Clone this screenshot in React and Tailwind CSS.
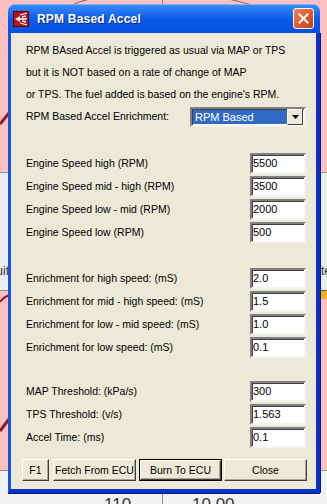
import React from 'react'

const engineRows = [
  ['Engine Speed high (RPM)', '5500'],
  ['Engine Speed mid - high (RPM)', '3500'],
  ['Engine Speed low - mid (RPM)', '2000'],
  ['Engine Speed low (RPM)', '500'],
]

const enrichRows = [
  ['Enrichment for high speed: (mS)', '2.0'],
  ['Enrichment for mid - high speed: (mS)', '1.5'],
  ['Enrichment for low - mid speed: (mS)', '1.0'],
  ['Enrichment for low speed: (mS)', '0.1'],
]

const thresholdRows = [
  ['MAP Threshold: (kPa/s)', '300'],
  ['TPS Threshold: (v/s)', '1.563'],
  ['Accel Time: (ms)', '0.1'],
]

function Field({ label, value }) {
  return (
    <div className="flex items-center justify-between h-[21px]">
      <span className="whitespace-nowrap">{label}</span>
      <div className="w-[56px] h-[21px] bg-white border-2 border-t-[#808080] border-l-[#808080] border-b-[#f4f3ee] border-r-[#f4f3ee] shadow-[inset_1px_1px_0_#404040] pl-[1px] leading-[17px] text-[11px]">
        {value}
      </div>
    </div>
  )
}

function Section({ rows, className }) {
  return (
    <div className={`flex flex-col gap-[2px] pl-[15px] pr-[10px] ${className}`}>
      {rows.map(([l, v]) => <Field key={l} label={l} value={v} />)}
    </div>
  )
}

function Btn({ children, w, def }) {
  return (
    <div className={`${w} h-[22px] ${def ? 'border border-black' : ''}`}>
      <div className="w-full h-full bg-[#ece9d8] border border-t-white border-l-white border-b-[#404040] border-r-[#404040] shadow-[inset_-1px_-1px_0_#aca899] flex items-center justify-center text-[10.5px] leading-none whitespace-nowrap">
        {children}
      </div>
    </div>
  )
}

function AppIcon() {
  return (
    <svg width="16" height="16" viewBox="0 0 16 16">
      <rect x="0.5" y="0.5" width="15" height="15" fill="#b3121a" stroke="#5a0508" />
      <path d="M2 8 L7 5 L7 11 Z" fill="#fde3e3" />
      <path d="M7 4 L14 2 M7 8 L14 8 M7 12 L14 14 M9 6 L13 5 M9 10 L13 11" stroke="#fff" strokeWidth="1.3" />
    </svg>
  )
}

function Backdrop() {
  return (
    <div className="absolute inset-0 grid grid-cols-[163px_1fr]">
      <div className="flex flex-col border-r border-[#8c8c8c]">
        <div className="h-[172px] bg-[#ffc0c0]" />
        <div className="h-[118px] bg-[#ececec] border-t border-[#8c8c8c] flex flex-col justify-end pb-[10px]">
          <div className="w-[9px] overflow-hidden flex justify-end text-[12px] text-[#333]">
            <span className="whitespace-nowrap">Circuit</span>
          </div>
        </div>
        <div className="h-[180px] bg-[#ffc0c0] border-t border-[#8c8c8c]" />
        <div className="flex-1 bg-[#f2f2f2] border-t border-[#8c8c8c] pt-[25px] pl-[104px] text-[17px] leading-none text-[#333]">110</div>
      </div>
      <div className="flex flex-col">
        <div className="h-[172px] bg-[#ffc0c0]" />
        <div className="h-[118px] bg-[#ececec] border-t border-[#8c8c8c] flex flex-col justify-end items-end pb-[10px]">
          <div className="w-[6px] overflow-hidden text-[12px] text-[#333]">
            <span className="whitespace-nowrap">test</span>
          </div>
        </div>
        <div className="h-[180px] bg-[#ffc0c0] border-t border-[#555] flex flex-col items-end">
          <div className="w-[10px] h-[8px] bg-[#f2b400]" />
        </div>
        <div className="flex-1 bg-[#f2f2f2] border-t border-[#8c8c8c] pt-[25px] pl-[29px] text-[17px] leading-none text-[#333]">10.00</div>
      </div>
      <svg className="absolute inset-0" width="327" height="504" viewBox="0 0 327 504">
        <path d="M0 124 L9 113" stroke="#8b1c24" strokeWidth="3" fill="none" />
        <path d="M0 302 Q4 297 9 295" stroke="#8b1c24" strokeWidth="2" fill="none" />
        <path d="M0 431 L9 419" stroke="#8b1c24" strokeWidth="3" fill="none" />
        <path d="M72 5 Q80 1 90 -1" stroke="#7a6a6a" strokeWidth="1" fill="none" />
        <path d="M228 -1 Q238 1 252 5" stroke="#7a6a6a" strokeWidth="1" fill="none" />
      </svg>
    </div>
  )
}

function Dialog() {
  return (
    <div className="absolute left-[8px] top-[4px] w-[312px] h-[489px] flex flex-col">
      <div className="h-[29px] rounded-t-[7px] bg-linear-to-b from-[#3d8ef8] via-[#0a5cec] to-[#0450e0] flex items-center pl-[5px] pr-[6px] shadow-[inset_0_1px_0_#7ab4ff]">
        <AppIcon />
        <span className="ml-[8px] text-white font-bold text-[12px] tracking-[0.2px] [text-shadow:1px_1px_0_#0a2a8c]">RPM Based Accel</span>
        <div className="ml-auto w-[21px] h-[21px] rounded-[3px] border border-white bg-linear-to-br from-[#f0845e] via-[#e35a2e] to-[#c73a14] flex items-center justify-center">
          <svg width="11" height="11" viewBox="0 0 11 11">
            <path d="M1.5 1.5 L9.5 9.5 M9.5 1.5 L1.5 9.5" stroke="#fff" strokeWidth="2" strokeLinecap="square" />
          </svg>
        </div>
      </div>
      <div className="flex-1 bg-[#ece9d8] border-l-[3px] border-r-[4px] border-b-[4px] border-l-[#1651e6] border-r-[#0831c8] border-b-[#0831c8] shadow-[1px_0_0_#001a8c,0_1px_0_#001a8c] text-[10.5px] text-black flex flex-col">
        <div className="pt-[6px] pl-[15px] pr-[10px]">
          <div className="h-[22px] leading-[22px] whitespace-nowrap">RPM BAsed Accel is triggered as usual via MAP or TPS</div>
          <div className="h-[22px] leading-[22px] whitespace-nowrap">but it is NOT based on a rate of change of MAP</div>
          <div className="h-[22px] leading-[22px] whitespace-nowrap">or TPS. The fuel added is based on the engine's RPM.</div>
          <div className="mt-[2px] h-[20px] flex items-center justify-between">
            <span>RPM Based Accel Enrichment:</span>
            <div className="w-[116px] h-[20px] bg-white border-2 border-t-[#808080] border-l-[#808080] border-b-[#f4f3ee] border-r-[#f4f3ee] shadow-[inset_1px_1px_0_#404040] flex items-center pl-[1px] pr-[1px]">
              <div className="flex-1 h-[14px] bg-[#316ac5] text-white text-[11px] leading-[14px] pl-[2px]">RPM Based</div>
              <div className="w-[16px] h-[16px] bg-[#ece9d8] border border-t-white border-l-white border-b-[#404040] border-r-[#404040] flex items-center justify-center">
                <svg width="7" height="4" viewBox="0 0 7 4"><path d="M0 0 H7 L3.5 4 Z" fill="#000" /></svg>
              </div>
            </div>
          </div>
        </div>
        <Section rows={engineRows} className="mt-[26px]" />
        <Section rows={enrichRows} className="mt-[25px]" />
        <Section rows={thresholdRows} className="mt-[23px]" />
        <div className="mt-[11px] pl-[11px] flex">
          <Btn w="w-[27px]">F1</Btn>
          <div className="w-[4px]" />
          <Btn w="w-[83px]">Fetch From ECU</Btn>
          <div className="w-[3px]" />
          <Btn w="w-[83px]" def>Burn To ECU</Btn>
          <div className="w-[2px]" />
          <Btn w="w-[83px]">Close</Btn>
        </div>
      </div>
    </div>
  )
}

export default function App() {
  return (
    <div className="relative w-[327px] h-[504px] overflow-hidden bg-[#ffc0c0] font-['Liberation_Sans',Arial,sans-serif]">
      <Backdrop />
      <Dialog />
    </div>
  )
}
